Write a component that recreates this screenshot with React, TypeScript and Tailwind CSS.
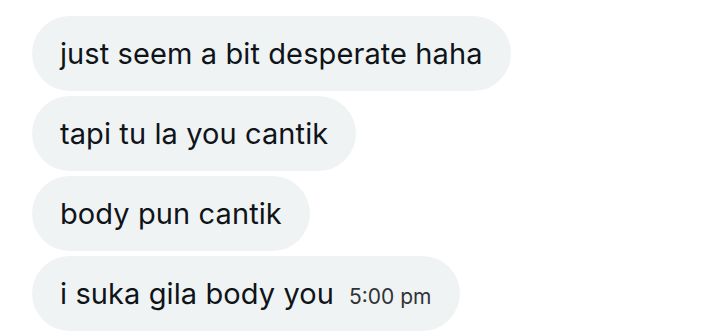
import React from 'react';

const messages = [
  { id: 1, text: 'just seem a bit desperate haha' },
  { id: 2, text: 'tapi tu la you cantik' },
  { id: 3, text: 'body pun cantik' },
  { id: 4, text: 'i suka gila body you', time: '5:00 pm' },
];

const App: React.FC = () => {
  return (
    <div
      className="w-[719px] h-[333px] bg-white overflow-hidden pt-4 pl-8 flex flex-col items-start gap-[5px]"
      style={{ fontFamily: 'Inter, "Noto Sans", sans-serif' }}
    >
      {messages.map((m) => (
        <div
          key={m.id}
          className="h-[75px] rounded-full bg-[#eff3f4] pl-[28px] pr-[28px] flex items-center text-[#0f1419]"
        >
          <span className="text-[29px] leading-none tracking-[0.1px]">{m.text}</span>
          {m.time && (
            <span className="ml-[15px] text-[21px] leading-none text-[#2f3336] mt-[6px]">{m.time}</span>
          )}
        </div>
      ))}
    </div>
  );
};

export default App;
